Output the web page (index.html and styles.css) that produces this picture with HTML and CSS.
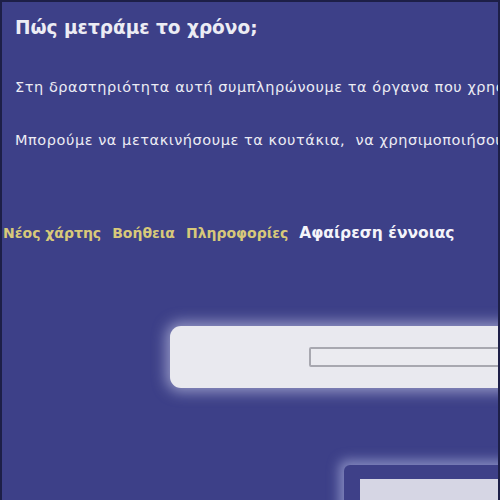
FILE: index.html
```html
<!DOCTYPE html>
<html lang="el">
<head>
    <meta charset="UTF-8">
    <title>Πώς μετράμε το χρόνο;</title>
    <link rel="stylesheet" href="styles.css">
</head>
<body>
    <div class="page">
        <div class="intro">
            <h1>Πώς μετράμε το χρόνο;</h1>
            <p>Στη δραστηριότητα αυτή συμπληρώνουμε τα όργανα που χρησιμοποιούμε για να μετρήσουμε το χρόνο.</p>
            <p>Μπορούμε να μετακινήσουμε τα κουτάκια,&nbsp; να χρησιμοποιήσουμε τα εργαλεία του χάρτη.</p>
        </div>

        <div class="menu">
            <a href="#">Νέος χάρτης</a>
            <a href="#">Βοήθεια</a>
            <a href="#">Πληροφορίες</a>
            <a href="#" class="current">Αφαίρεση έννοιας</a>
        </div>

        <div class="toolbar">
            <input type="text" class="concept">
        </div>

        <div class="map">
            <div class="map-inner"></div>
        </div>
    </div>
</body>
</html>
```

FILE: styles.css
```css
body {
    margin: 0;
    background-color: #1d1f47;
    font-family: "DejaVu Sans", Verdana, sans-serif;
}

.page {
    height: 498px;
    margin: 2px 2px 0 2px;
    background-color: #3d4088;
    overflow: hidden;
    color: #ececf4;
}

.intro {
    padding: 0 0 0 13px;
    white-space: nowrap;
}

h1 {
    margin: 0;
    padding-top: 14px;
    font-size: 18.5px;
    font-weight: bold;
    line-height: 24px;
}

.intro p {
    margin: 38px 0 0 0;
    font-size: 14.5px;
    line-height: 18px;
    letter-spacing: 0.55px;
}

.intro p + p {
    margin-top: 35px;
}

.menu {
    display: flex;
    align-items: baseline;
    gap: 11px;
    margin-top: 75px;
    padding-left: 1px;
    white-space: nowrap;
}

.menu a {
    color: #d8c97a;
    font-size: 14px;
    font-weight: bold;
    text-decoration: none;
}

.menu a.current {
    color: #f4f4fa;
    font-size: 15.5px;
}

.toolbar {
    display: flex;
    align-items: center;
    height: 62px;
    margin: 84px -40px 0 168px;
    padding-left: 139px;
    background-color: #e9e9ef;
    border-radius: 11px;
    box-shadow: 0 0 14px 4px rgba(220, 222, 245, 0.55);
}

.concept {
    width: 400px;
    height: 14px;
    margin: 0;
    padding: 1px;
    background-color: #ebebf0;
    border: 2px solid #a8a8b0;
    border-radius: 2px;
}

.map {
    margin: 77px -40px 0 342px;
    padding: 14px 0 0 16px;
    height: 60px;
    background-color: #3e4088;
    border-radius: 6px;
    box-shadow: -3px -3px 12px 2px rgba(190, 195, 235, 0.55);
}

.map-inner {
    height: 60px;
    background-color: #d6d6e4;
}
```
